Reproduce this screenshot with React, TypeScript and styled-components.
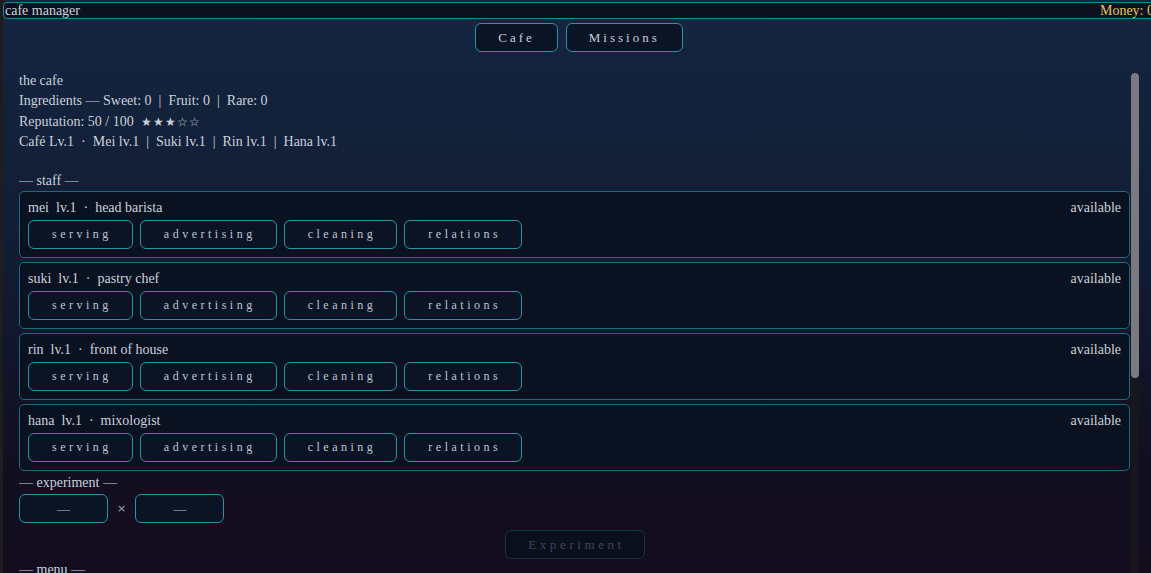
import React, { FC } from 'react';
import styled, { createGlobalStyle } from 'styled-components';

const GlobalStyle = createGlobalStyle`
  html, body {
    margin: 0;
    padding: 0;
    background: #1d1d20;
    overflow: hidden;
  }
  * { box-sizing: border-box; }
`;

const serif = `"Liberation Serif", "DejaVu Serif", serif`;

const Shell = styled.div`
  margin-left: 3px;
  width: 1152px;
  height: 100vh;
  display: flex;
  flex-direction: column;
  background: linear-gradient(180deg, #152641 0%, #111c33 45%, #120f21 80%, #130d1e 100%);
  font-family: ${serif};
  font-size: 14px;
  color: #c9d1dc;
`;

const TopBar = styled.header`
  margin-top: 2px;
  display: flex;
  justify-content: space-between;
  align-items: center;
  height: 17px;
  line-height: 15px;
  padding: 0 0 0 1px;
  background: #0b111f;
  border: 1px solid #1f8797;
  border-radius: 4px;
`;

const Money = styled.span`
  color: #e9c25e;
`;

const Nav = styled.nav`
  display: flex;
  justify-content: center;
  gap: 8px;
  padding-top: 4px;
  margin-bottom: 19px;
`;

const PillButton = styled.button<{ $muted?: boolean }>`
  height: 29px;
  padding: 0 22px;
  font-family: ${serif};
  font-size: 12px;
  letter-spacing: 3px;
  color: ${p => (p.$muted ? '#3a4660' : '#bcc7d5')};
  background: ${p => (p.$muted ? '#0b0f1c' : '#0b1424')};
  border: 1px solid ${p => (p.$muted ? '#14333f' : '#2893a3')};
  border-radius: 6px;
  cursor: ${p => (p.$muted ? 'default' : 'pointer')};
`;

const NavButton = styled(PillButton)`
  font-size: 13px;
  color: #c3cfdc;
`;

const ExperimentButton = styled(PillButton)`
  font-size: 13px;
  letter-spacing: 3.6px;
  padding: 0 19px 0 22px;
`;

/* scroll pane: content column plus a drawn track on the right */
const Pane = styled.div`
  flex: 1;
  min-height: 0;
  margin: 0 16px;
  display: flex;
`;

const Content = styled.main`
  flex: 1;
  overflow: hidden;
`;

const Track = styled.div`
  width: 8px;
  margin-top: 2px;
  background: #17151d;
`;

const Thumb = styled.div`
  height: 305px;
  background: #7a7a80;
  border-radius: 4px;
`;

const Line = styled.div<{ $gap?: number }>`
  line-height: 20px;
  margin-bottom: ${p => p.$gap ?? 0}px;
  white-space: pre;
`;

const Stars = styled.span`
  font-size: 12px;
  letter-spacing: 1px;
`;

const SectionTitle = styled.div<{ $top: number; $bottom: number }>`
  line-height: 20px;
  margin-top: ${p => p.$top}px;
  margin-bottom: ${p => p.$bottom}px;
`;

const StaffList = styled.div`
  display: flex;
  flex-direction: column;
  gap: 4px;
  margin-right: 1px;
`;

const Card = styled.section`
  padding: 7px 8px 8px;
  background: #0a1120;
  border: 1px solid #1c6a7b;
  border-radius: 5px;
`;

const CardHead = styled.div`
  display: flex;
  justify-content: space-between;
  line-height: 18px;
  margin-bottom: 3px;
  white-space: pre;
`;

const ButtonRow = styled.div`
  display: flex;
  gap: 7px;
`;

const TaskButton = styled(PillButton)`
  letter-spacing: 3.5px;
  padding: 0 20px 0 23px;
`;

const MixRow = styled.div`
  display: flex;
  align-items: center;
  gap: 9px;
  margin-top: 1px;
`;

const Slot = styled.button`
  width: 89px;
  height: 29px;
  font-family: ${serif};
  font-size: 13px;
  color: #b9c4d2;
  background: #0b1424;
  border: 1px solid #2893a3;
  border-radius: 6px;
`;

const Times = styled.span`
  font-family: "DejaVu Sans", sans-serif;
  font-size: 11px;
  color: #9aa3b3;
`;

const Center = styled.div`
  display: flex;
  justify-content: center;
  margin-top: 7px;
`;

const MenuRow = styled.div`
  display: flex;
  justify-content: space-between;
  line-height: 20px;
  padding: 6px 8px;
  margin-bottom: 4px;
  background: #0a1120;
  border: 1px solid #1c6a7b;
  border-radius: 5px;
`;

const staff = [
  { name: 'mei', role: 'head barista' },
  { name: 'suki', role: 'pastry chef' },
  { name: 'rin', role: 'front of house' },
  { name: 'hana', role: 'mixologist' },
];

const tasks = ['serving', 'advertising', 'cleaning', 'relations'];

const menu = [
  { dish: 'house blend coffee', price: 4 },
  { dish: 'strawberry shortcake', price: 7 },
  { dish: 'matcha latte', price: 5 },
  { dish: 'honey toast', price: 6 },
];

const sep = '\u00a0 |\u00a0 ';

const App: FC = () => {
  return (
    <>
      <GlobalStyle />
      <Shell>
        <TopBar>
          <span>cafe manager</span>
          <Money>Money: 0</Money>
        </TopBar>

        <Nav>
          <NavButton>Cafe</NavButton>
          <NavButton>Missions</NavButton>
        </Nav>

        <Pane>
          <Content>
            <Line>the cafe</Line>
            <Line $gap={1}>{`Ingredients — Sweet: 0${sep}Fruit: 0${sep}Rare: 0`}</Line>
            <Line>
              {'Reputation: 50 / 100  '}
              <Stars>★★★☆☆</Stars>
            </Line>
            <Line>{`Café Lv.1 \u00a0·\u00a0 Mei lv.1 \u00a0|\u00a0 Suki lv.1 \u00a0|\u00a0 Rin lv.1 \u00a0|\u00a0 Hana lv.1`}</Line>

            <SectionTitle $top={19} $bottom={0}>— staff —</SectionTitle>
            <StaffList>
              {staff.map(s => (
                <Card key={s.name}>
                  <CardHead>
                    <span>{`${s.name}\u00a0 lv.1 \u00a0·\u00a0 ${s.role}`}</span>
                    <span>available</span>
                  </CardHead>
                  <ButtonRow>
                    {tasks.map(t => (
                      <TaskButton key={t}>{t}</TaskButton>
                    ))}
                  </ButtonRow>
                </Card>
              ))}
            </StaffList>

            <SectionTitle $top={2} $bottom={0}>— experiment —</SectionTitle>
            <MixRow>
              <Slot>—</Slot>
              <Times>×</Times>
              <Slot>—</Slot>
            </MixRow>
            <Center>
              <ExperimentButton $muted disabled>Experiment</ExperimentButton>
            </Center>

            <SectionTitle $top={1} $bottom={2}>— menu —</SectionTitle>
            {menu.map(m => (
              <MenuRow key={m.dish}>
                <span>{m.dish}</span>
                <span>{m.price} coins</span>
              </MenuRow>
            ))}
          </Content>
          <Track>
            <Thumb />
          </Track>
        </Pane>
      </Shell>
    </>
  );
};

export default App;
